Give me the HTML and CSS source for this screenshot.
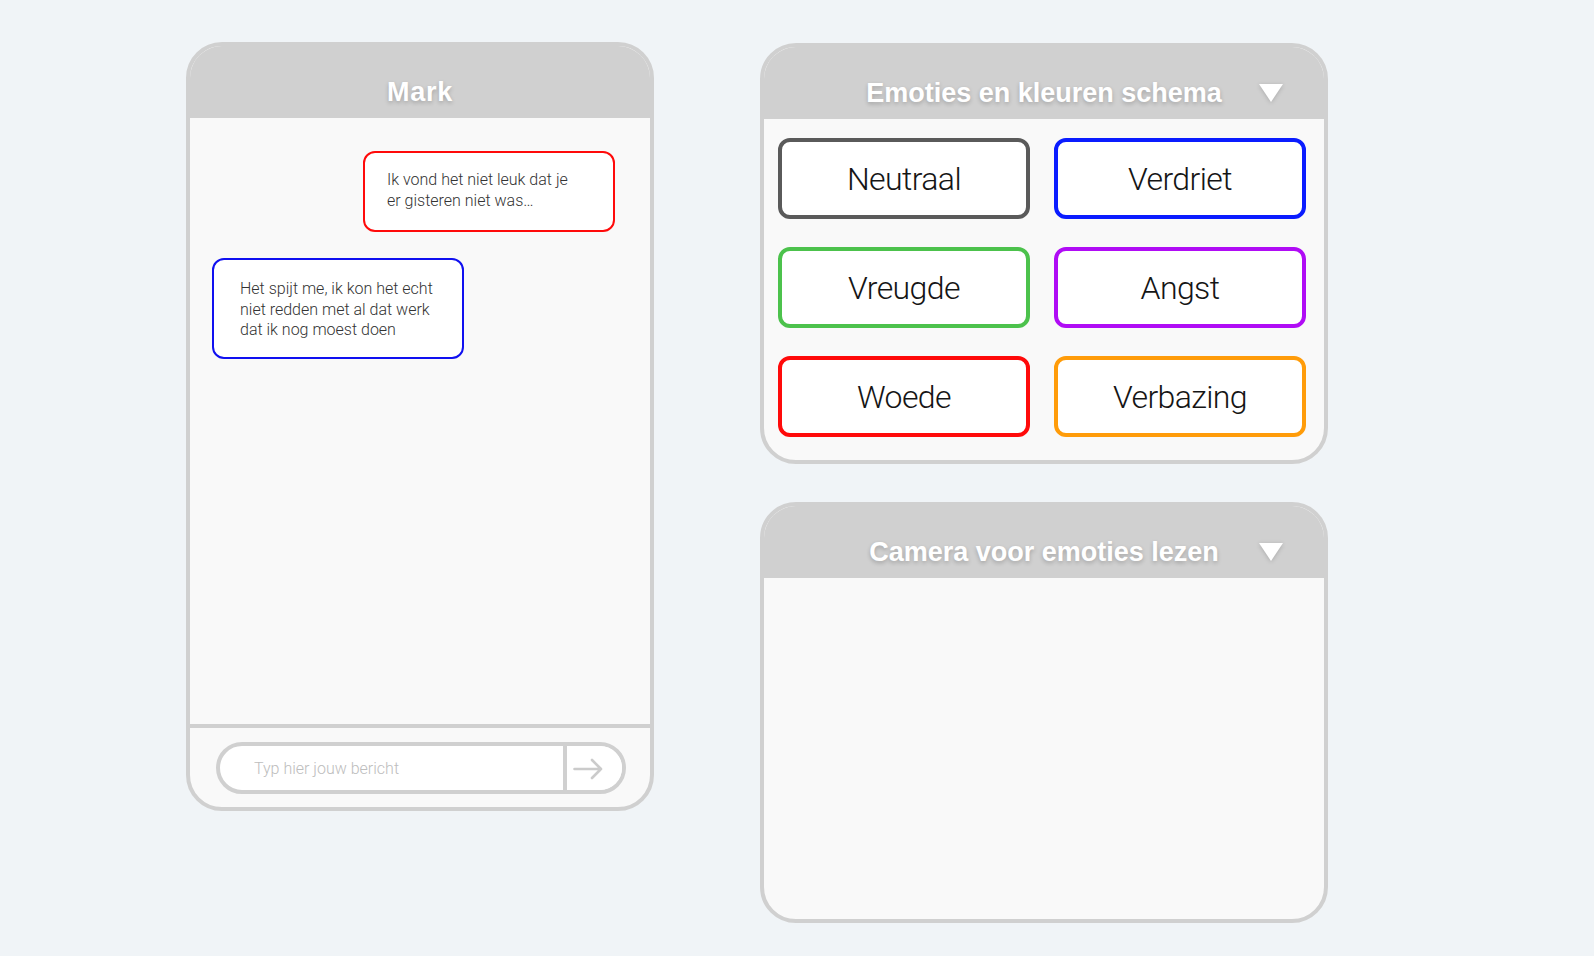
FILE: index.html
```html
<!DOCTYPE html>
<html lang="nl">
<head>
<meta charset="utf-8">
<title>Chat</title>
<link rel="stylesheet" href="styles.css">
</head>
<body>
<main class="page">
  <section class="panel chat">
    <header class="panel-head">
      <span></span>
      <h1 class="title">Mark</h1>
      <span></span>
    </header>
    <div class="messages">
      <div class="bubble sent">Ik vond het niet leuk dat je er gisteren niet was…</div>
      <div class="bubble received">Het spijt me, ik kon het echt niet redden met al dat werk dat ik nog moest doen</div>
    </div>
    <footer class="composer">
      <div class="pill">
        <input class="field" type="text" placeholder="Typ hier jouw bericht">
        <button class="send" type="button" aria-label="Verstuur">
          <svg width="30" height="22" viewBox="0 0 30 22"><path d="M1.5 11 H28 M19 2 L28 11 L19 20" fill="none" stroke="#cbcbcb" stroke-width="2.6" stroke-linecap="round" stroke-linejoin="round"/></svg>
        </button>
      </div>
    </footer>
  </section>

  <div class="side">
    <section class="panel emotions">
      <header class="panel-head">
        <span></span>
        <h2 class="title">Emoties en kleuren schema</h2>
        <svg class="caret" width="24" height="18" viewBox="0 0 24 18"><polygon points="0,0 24,0 12,18" fill="#ffffff"/></svg>
      </header>
      <div class="grid">
        <div class="emo neutral">Neutraal</div>
        <div class="emo sad">Verdriet</div>
        <div class="emo joy">Vreugde</div>
        <div class="emo fear">Angst</div>
        <div class="emo anger">Woede</div>
        <div class="emo surprise">Verbazing</div>
      </div>
    </section>

    <section class="panel camera">
      <header class="panel-head">
        <span></span>
        <h2 class="title">Camera voor emoties lezen</h2>
        <svg class="caret" width="24" height="18" viewBox="0 0 24 18"><polygon points="0,0 24,0 12,18" fill="#ffffff"/></svg>
      </header>
      <div class="cam-body"></div>
    </section>
  </div>
</main>
</body>
</html>
```

FILE: styles.css
```css
* { box-sizing: border-box; }

html, body {
  margin: 0;
  padding: 0;
  background: #f0f4f7;
  font-family: Roboto, "Liberation Sans", sans-serif;
}

.page {
  display: flex;
  align-items: flex-start;
  gap: 106px;
  padding: 42px 0 0 186px;
}

.panel {
  border: 4px solid #d0d0d0;
  border-radius: 36px;
  background: #f9f9f9;
  overflow: hidden;
  display: flex;
  flex-direction: column;
}

.panel-head {
  height: 72px;
  flex: none;
  background: #d0d0d0;
  display: grid;
  grid-template-columns: 1fr auto 1fr;
  align-items: center;
  padding-top: 20px;
}

.title {
  margin: 0;
  font-family: "Liberation Sans", Arial, sans-serif;
  font-weight: 700;
  font-size: 27px;
  line-height: 32px;
  color: #ffffff;
  text-shadow: 0 2px 4px rgba(0, 0, 0, 0.22);
}

.chat .title { letter-spacing: 0.8px; }

.caret {
  justify-self: end;
  margin-right: 41px;
  filter: drop-shadow(0 1px 2px rgba(0, 0, 0, 0.18));
}

/* Chat */
.chat {
  width: 468px;
  height: 769px;
}

.messages {
  flex: 1;
  display: flex;
  flex-direction: column;
  padding: 33px 35px 0 22px;
  gap: 26px;
}

.bubble {
  width: 252px;
  background: #ffffff;
  border: 2px solid;
  border-radius: 12px;
  font-weight: 300;
  font-size: 16px;
  line-height: 20.5px;
  color: #333333;
}

.sent {
  align-self: flex-end;
  border-color: #ff0a0a;
  min-height: 81px;
  padding: 17px 34px 16px 22px;
}

.received {
  align-self: flex-start;
  border-color: #1010f0;
  min-height: 101px;
  padding: 19px 16px 15px 26px;
}

.composer {
  flex: none;
  height: 83px;
  border-top: 4px solid #d0d0d0;
  padding: 14px 24px 0 26px;
}

.pill {
  height: 52px;
  border: 4px solid #d0d0d0;
  border-radius: 26px;
  background: #ffffff;
  display: flex;
  overflow: hidden;
}

.field {
  flex: 1;
  min-width: 0;
  border: 0;
  outline: none;
  background: transparent;
  padding: 0 0 0 34px;
  font-family: Roboto, "Liberation Sans", sans-serif;
  font-weight: 300;
  font-size: 16px;
  color: #333;
}

.field::placeholder { color: #bdbdbd; }

.send {
  flex: none;
  width: 59px;
  border: 0;
  border-left: 4px solid #d0d0d0;
  background: #ffffff;
  padding: 2px 0 0 6px;
  display: flex;
  align-items: center;
  justify-content: flex-start;
}

/* Right side */
.side {
  display: flex;
  flex-direction: column;
  gap: 38px;
  padding-top: 1px;
}

.emotions {
  width: 568px;
  height: 421px;
}

.grid {
  display: grid;
  grid-template-columns: 252px 252px;
  grid-auto-rows: 81px;
  column-gap: 24px;
  row-gap: 28px;
  padding: 19px 18px 24px 14px;
}

.emo {
  background: #ffffff;
  border: 4px solid;
  border-radius: 12px;
  display: flex;
  align-items: center;
  justify-content: center;
  font-weight: 300;
  font-size: 32px;
  letter-spacing: -0.6px;
  color: #151515;
  padding-top: 1px;
}

.neutral  { border-color: #5a5a5a; }
.sad      { border-color: #0a1cff; }
.joy      { border-color: #4cc24c; }
.fear     { border-color: #b00cf5; }
.anger    { border-color: #ff0a0a; }
.surprise { border-color: #ff9c0a; }

.camera {
  width: 568px;
  height: 421px;
}

.cam-body { flex: 1; }
```
